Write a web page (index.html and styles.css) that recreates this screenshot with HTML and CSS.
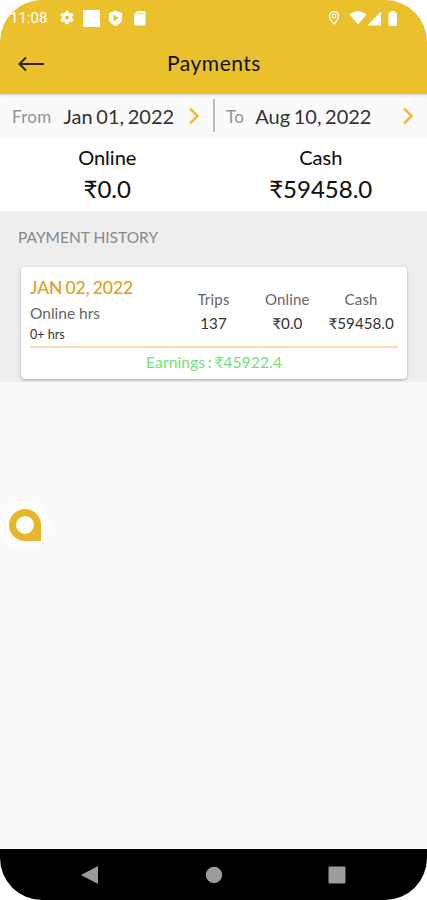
FILE: index.html
```
<!DOCTYPE html>
<html lang="en">

<head>
  <meta charset="utf-8">
  <title>Payments</title>
  <link rel="stylesheet" href="styles.css">
</head>

<body>
  <div class="phone">
    <header class="header">
      <div class="statusBar">
        <span class="clock">11:08</span>
        <svg class="statusIcons" width="88" height="18" viewBox="0 0 88 18">
          <g fill="#fff">
            <path fill-rule="evenodd" d="M5.600 2h2.800l.4 2 1.200.7 2-.7 1.400 2.400-1.600 1.400v1.400l1.600 1.400-1.400 2.400-2-.7-1.200.7-.4 2H5.600l-.4-2-1.200-.7-2 .7L.6 10.600 2.200 9.200V7.800L.6 6.400 2 4l2 .7L5.200 4zM7 6.200a2.300 2.300 0 1 0 0 4.600a2.300 2.300 0 1 0 0-4.600z" stroke="#fff" stroke-width=".5"/>
            <rect x="23" y="1" width="17" height="17"/>
            <path fill-rule="evenodd" d="M55.500 1.500L62 4v5c0 4-2.500 6.500-6.500 8C51.500 15.500 49 13 49 9V4zM53.500 5.500v7l5-3.500z"/>
            <path fill-rule="evenodd" d="M77 2h7c1 0 1.500.5 1.500 1.500V15c0 1-.5 1.500-1.500 1.500h-8.500c-1 0-1.500-.5-1.500-1.500V5.500zM77.500 4v1.500h1V4zM79.800 4v1.500h1V4zM82.100 4v1.500h1V4z"/>
          </g>
        </svg>
        <svg class="signalIcons" width="70" height="18" viewBox="0 0 70 18">
          <path fill="none" stroke="#fff" stroke-width="1.300" d="M6 15C3 12 1.500 9.500 1.500 7a4.500 4.500 0 0 1 9 0C10.500 9.500 9 12 6 15z"/>
          <circle cx="6" cy="7" r="1.800" fill="none" stroke="#fff" stroke-width="1.200"/>
          <g fill="#fff">
            <path d="M21.500 5.500Q30 -1.500 38.500 5.500L30 15.500z"/>
            <path d="M53 2.500V16.500H39.500z"/>
            <path d="M63 2h4v1.500h1q1 0 1 1v11q0 1.500-1.500 1.500h-5.500q-1.500 0-1.500-1.500v-11q0-1 1-1H63z"/>
          </g>
        </svg>
      </div>
      <div class="titleBar">
        <svg class="backArrow" width="27" height="16" viewBox="0 0 27 16" fill="none" stroke="#2b2307" stroke-width="2">
          <path d="M1.500 8H26M8 1.500L1.500 8L8 14.500"/>
        </svg>
        <h1 class="title">Payments</h1>
      </div>
    </header>

    <div class="dateRow">
      <div class="dateField dateFrom">
        <span class="dateLabel">From</span>
        <span class="dateValue">Jan 01, 2022</span>
        <svg class="chevron" width="12" height="18" viewBox="0 0 12 18"><path d="M2 1.500L9.500 9L2 16.500"/></svg>
      </div>
      <div class="dateField dateTo">
        <span class="dateLabel">To</span>
        <span class="dateValue">Aug 10, 2022</span>
        <svg class="chevron" width="12" height="18" viewBox="0 0 12 18"><path d="M2 1.500L9.500 9L2 16.500"/></svg>
      </div>
    </div>

    <div class="totals">
      <div class="total">
        <div class="totalLabel">Online</div>
        <div class="totalValue">₹0.0</div>
      </div>
      <div class="total">
        <div class="totalLabel">Cash</div>
        <div class="totalValue">₹59458.0</div>
      </div>
    </div>

    <section class="history">
      <h2 class="historyTitle">PAYMENT HISTORY</h2>
      <div class="card">
        <div class="cardTop">
          <div class="day">
            <div class="dayDate">JAN 02, 2022</div>
            <div class="dayLabel">Online hrs</div>
            <div class="dayHours">0+ hrs</div>
          </div>
          <div class="stat">
            <div class="statLabel">Trips</div>
            <div class="statValue">137</div>
          </div>
          <div class="stat">
            <div class="statLabel">Online</div>
            <div class="statValue">₹0.0</div>
          </div>
          <div class="stat">
            <div class="statLabel">Cash</div>
            <div class="statValue">₹59458.0</div>
          </div>
        </div>
        <div class="earnings">Earnings : ₹45922.4</div>
      </div>
    </section>

    <main class="content">
      <div class="bubble">
        <svg width="34" height="34" viewBox="0 0 34 34">
          <path fill="#e8b62b" fill-rule="evenodd" d="M17 1a16 16 0 0 0 0 32H33V17A16 16 0 0 0 17 1zM17 8a9 9 0 0 1 0 18a9 9 0 0 1 0-18z"/>
        </svg>
      </div>
    </main>

    <nav class="navBar">
      <svg width="18" height="20" viewBox="0 0 18 20"><path fill="#9c9c9c" d="M17 1V19L0 10z"/></svg>
      <svg width="18" height="20" viewBox="0 0 18 20"><circle cx="9" cy="10" r="8.200" fill="#9c9c9c"/></svg>
      <svg width="18" height="20" viewBox="0 0 18 20"><rect x=".5" y="1.500" width="17" height="17" rx="1" fill="#9c9c9c"/></svg>
    </nav>
  </div>
</body>

</html>
```

FILE: styles.css
```
body {
  margin: 0;
  background: #fff;
  font-family: Lato, "Noto Sans", sans-serif;
  color: #111;
}

.phone {
  display: flex;
  flex-direction: column;
  width: 427px;
  height: 900px;
  border-radius: 42px;
  overflow: hidden;
  background: #fafafa;
}

/* header */
.header {
  height: 94px;
  background: #ebc02d;
}
.statusBar {
  display: flex;
  align-items: center;
  height: 36px;
  padding: 0 29px 0 10px;
}
.clock {
  width: 50px;
  font-family: Roboto, sans-serif;
  font-size: 15px;
  color: #fff;
}
.signalIcons {
  margin-left: auto;
}
.titleBar {
  display: grid;
  grid-template-columns: 60px 1fr 60px;
  align-items: center;
  height: 56px;
}
.backArrow {
  margin-left: 18px;
}
.title {
  margin: 0;
  padding: 0 0 3px 1px;
  text-align: center;
  font-size: 21px;
  font-weight: 400;
  letter-spacing: 0.5px;
}

/* date range */
.dateRow {
  display: flex;
  height: 44px;
  padding-top: 2px;
  box-sizing: border-box;
  box-shadow: inset 0 3px 3px -2px #ccc;
}
.dateField {
  display: flex;
  align-items: center;
  box-sizing: border-box;
  height: 40px;
}
.dateFrom {
  width: 213px;
  padding: 0 13px 0 12px;
}
.dateTo {
  position: relative;
  flex: 1;
  padding: 0 13px 0 13px;
}
.dateTo::before {
  content: "";
  position: absolute;
  left: 0;
  top: 3px;
  width: 2px;
  height: 33px;
  background: #bdbdbd;
}
.dateLabel {
  margin-right: 12px;
  font-size: 17px;
  letter-spacing: 0.3px;
  color: #929292;
}
.dateTo .dateLabel {
  margin-right: 11px;
}
.dateValue {
  font-size: 20px;
  word-spacing: -1.5px;
  color: #333;
}
.chevron {
  margin-left: auto;
  fill: none;
  stroke: #fbb030;
  stroke-width: 2.4;
}

/* totals */
.totals {
  display: flex;
  height: 73px;
  background: #fff;
}
.total {
  flex: 1;
  padding-left: 1px;
  text-align: center;
}
.totalLabel {
  margin-top: 5px;
  font-size: 20px;
  line-height: 28px;
}
.totalValue {
  font-size: 24px;
  line-height: 36px;
}
.totalLabel,
.totalValue {
  -webkit-text-stroke: 0.1px #111;
}

/* history */
.history {
  height: 171px;
  padding: 0 20px 0 21px;
  box-sizing: border-box;
  background: #eee;
}
.historyTitle {
  margin: 0 0 0 -3px;
  padding: 15px 0 19px;
  font-size: 15.5px;
  font-weight: 400;
  line-height: 22px;
  color: #888;
}
.card {
  height: 112px;
  padding: 8px 9px 0;
  box-sizing: border-box;
  border-radius: 4px;
  background: #fff;
  box-shadow: 0 1px 3px rgba(0, 0, 0, 0.3);
}
.cardTop {
  display: flex;
  height: 73px;
  box-sizing: border-box;
  border-bottom: 2px solid #fbdcae;
}
.day {
  width: 147px;
}
.dayDate {
  font-size: 17.5px;
  line-height: 26px;
  word-spacing: -1.5px;
  color: #e0a020;
  -webkit-text-stroke: 0.2px #e0a020;
}
.dayLabel {
  font-size: 15.5px;
  line-height: 24px;
  color: #666;
}
.dayHours {
  font-size: 12.5px;
  line-height: 20px;
  color: #333;
}
.stat {
  width: 74px;
  padding-top: 12px;
  text-align: center;
  line-height: 24px;
}
.statLabel {
  font-size: 15px;
  letter-spacing: 0.2px;
  color: #666;
}
.statValue {
  font-size: 15.2px;
  color: #333;
}
.earnings {
  text-align: center;
  font-size: 15.8px;
  line-height: 28px;
  word-spacing: -1.5px;
  color: #70e37c;
}

/* floating button */
.content {
  flex: 1;
  padding: 118px 0 0;
}
.bubble {
  display: flex;
  align-items: center;
  justify-content: center;
  width: 50px;
  height: 50px;
  border-radius: 50%;
  background: #fdfdfd;
}

/* system buttons */
.navBar {
  display: flex;
  align-items: center;
  justify-content: space-between;
  height: 51px;
  padding: 0 81px;
  box-sizing: border-box;
  background: #000;
}
```
